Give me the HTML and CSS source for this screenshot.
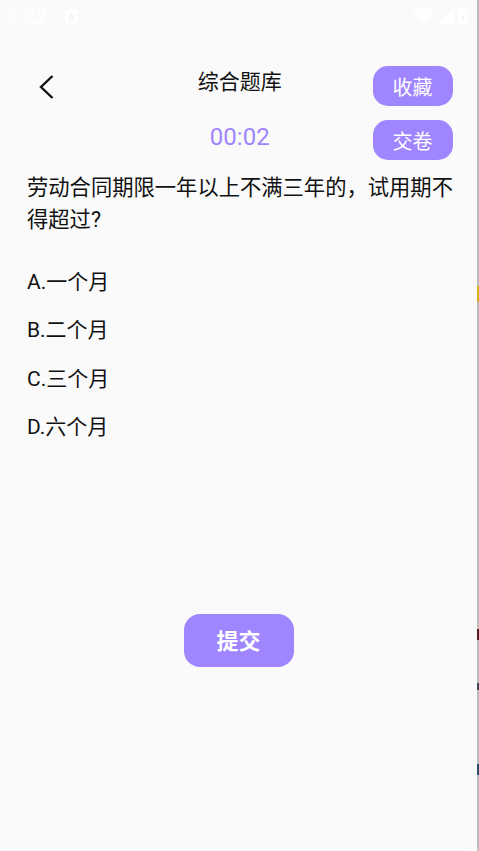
FILE: index.html
```html
<!DOCTYPE html>
<html lang="zh-CN">
<head>
<meta charset="utf-8">
<title>综合题库</title>
<link rel="stylesheet" href="styles.css">
</head>
<body>
<div class="device">
  <main class="screen">
    <div class="status">
      <div class="status-left">
        <span class="clock">2:22</span>
        <svg class="note" width="13" height="14" viewBox="0 0 13 14"><path fill="#fff" d="M1.5 0h10A1.5 1.5 0 0 1 13 1.5v11a1.5 1.5 0 0 1-1.5 1.5h-10A1.5 1.5 0 0 1 0 12.500v-11A1.500 1.500 0 0 1 1.500 0z"/><path fill="#f1f1f1" d="M6.500 3 9.500 10H8.300l-.6-1.500H5.300L4.700 10H3.500zM5.700 7.500h1.600L6.500 5.400zM4 11.300h5v.7H4z"/></svg>
      </div>
      <div class="status-right">
        <svg width="21" height="16" viewBox="0 0 21 16"><path fill="#fff" d="M0 3.500Q10.500-3.500 21 3.500L10.500 16z"/></svg>
        <svg width="16" height="16" viewBox="0 0 16 16"><path fill="#fff" d="M16 0v16H0z"/></svg>
        <svg width="10" height="17" viewBox="0 0 10 17"><path fill="#fff" d="M3 0h4v1.500h2a1 1 0 0 1 1 1V16a1 1 0 0 1-1 1H1a1 1 0 0 1-1-1V2.500a1 1 0 0 1 1-1h2z"/><path fill="#efefef" d="M5.500 5 3.500 9.500h1.500L4.500 13l2-4.500H5z"/></svg>
      </div>
    </div>

    <header class="head">
      <button class="back" aria-label="返回">
        <svg width="15" height="24" viewBox="0 0 15 24"><path d="M13.500 1 2 12l11.500 11" fill="none" stroke="#111" stroke-width="2.400"/></svg>
      </button>
      <div class="center">
        <h1 class="title">综合题库</h1>
        <div class="timer">00:02</div>
      </div>
      <div class="actions">
        <button class="pill">收藏</button>
        <button class="pill">交卷</button>
      </div>
    </header>

    <section class="quiz">
      <p class="question">劳动合同期限一年以上不满三年的，试用期不得超过?</p>
      <ul class="options">
        <li>A.一个月</li>
        <li>B.二个月</li>
        <li>C.三个月</li>
        <li>D.六个月</li>
      </ul>
    </section>

    <div class="submit-wrap">
      <button class="submit">提交</button>
    </div>
  </main>
  <div class="edge"></div>
</div>
</body>
</html>
```
FILE: styles.css
```css
* { box-sizing: border-box; }
html, body { margin: 0; height: 100%; }
body {
  background: #fafafa;
  font-family: Roboto, "Noto Sans CJK SC", sans-serif;
  color: #111;
  overflow: hidden;
}
button { font-family: inherit; border: 0; padding: 0; cursor: pointer; }

.device { display: flex; height: 851px; background: #fff; }
.screen {
  flex: 1;
  min-width: 0;
  background: #fafafa;
  border-bottom-right-radius: 10px;
}
.edge {
  width: 2px;
  background:
    linear-gradient(#d9b11c, #d9b11c) 0 286px / 2px 16px no-repeat,
    linear-gradient(#5a1c20, #5a1c20) 0 629px / 2px 11px no-repeat,
    linear-gradient(#3a4a5a, #3a4a5a) 0 683px / 2px 7px no-repeat,
    linear-gradient(#2a4a70, #2a4a70) 0 764px / 2px 11px no-repeat,
    #bdbdbd;
}

.status {
  height: 32px;
  padding: 0 8px 0 8px;
  display: flex;
  justify-content: space-between;
  align-items: center;
}
.status-left { display: flex; align-items: center; gap: 18px; }
.clock { color: #fff; font-size: 20px; padding-top: 1px; }
.status-right { display: flex; align-items: center; gap: 4px; margin-right: 1px; }
.note { display: block; }
.status-right svg { display: block; }

.head {
  display: grid;
  grid-template-columns: 1fr auto 1fr;
  padding: 35px 24.500px 0 27px;
}
.back {
  justify-self: start;
  align-self: start;
  margin: 8px 0 0 12px;
  background: none;
  width: 15px;
  height: 24px;
}
.back svg { display: block; }
.center { text-align: center; }
.title {
  margin: 0;
  font-size: 21px;
  font-weight: 400;
  line-height: 30px;
}
.timer {
  margin-top: 25px;
  color: #9f85ff;
  font-size: 24px;
  line-height: 30px;
}
.actions {
  justify-self: end;
  display: flex;
  flex-direction: column;
  gap: 14px;
  margin-top: -1px;
}
.pill {
  width: 80px;
  height: 40px;
  border-radius: 15px;
  background: #9f85ff;
  color: #fff;
  font-size: 20px;
  padding-top: 1px;
}

.quiz { padding: 12px 20px 0 27px; }
.question {
  margin: 0;
  font-size: 21.300px;
  line-height: 32px;
}
.options {
  list-style: none;
  margin: 31px 0 0;
  padding: 0;
  display: flex;
  flex-direction: column;
  gap: 18.300px;
  font-size: 21px;
  line-height: 30px;
}

.submit-wrap { display: flex; justify-content: center; margin-top: 172px; }
.submit {
  width: 110px;
  height: 53px;
  border-radius: 16px;
  background: #9f85ff;
  color: #fff;
  font-size: 22px;
  font-weight: 700;
  padding-bottom: 2px;
}
```
